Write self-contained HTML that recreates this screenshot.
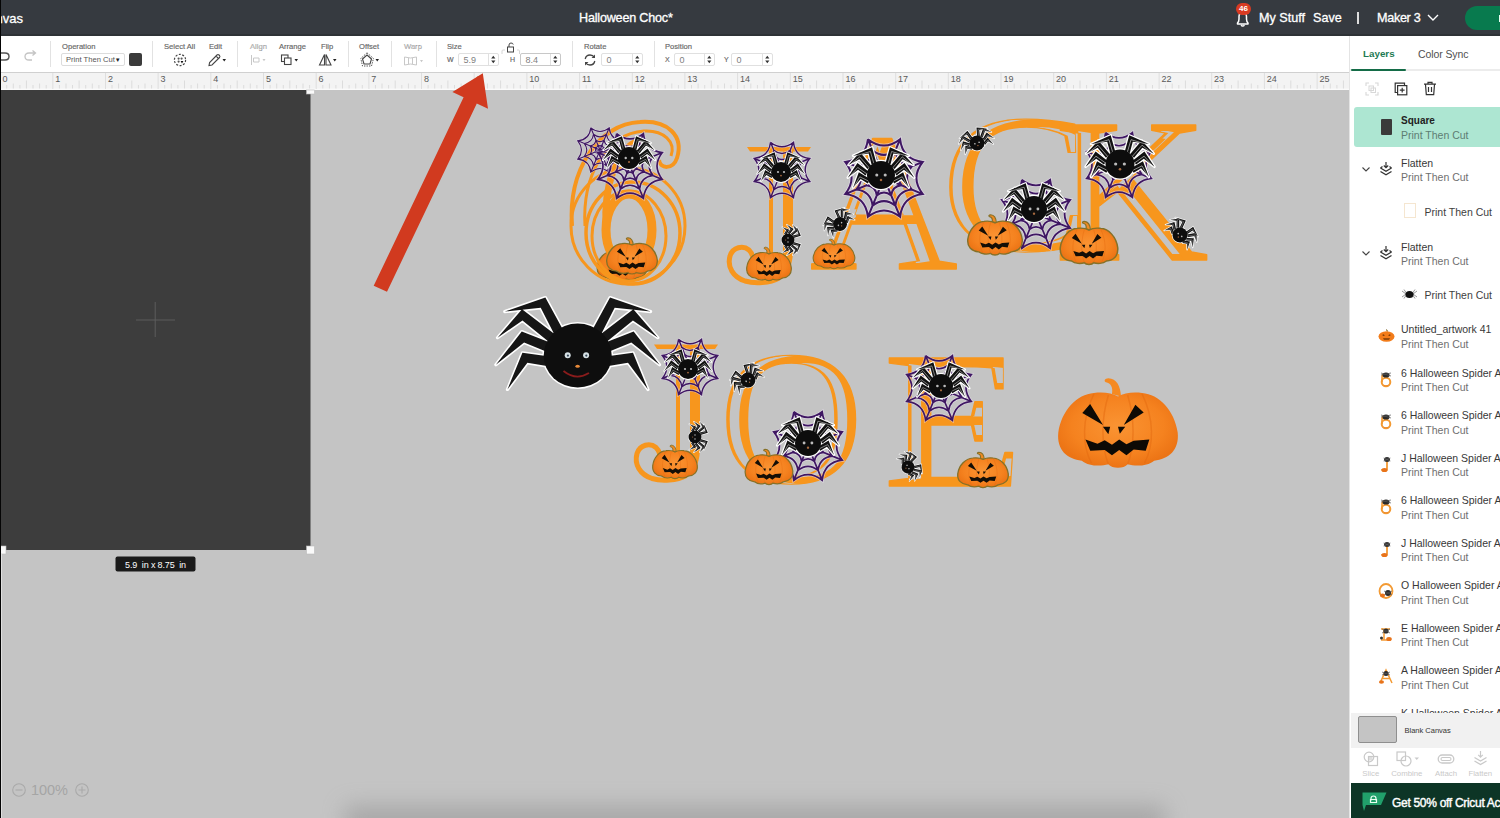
<!DOCTYPE html>
<html><head><meta charset="utf-8">
<style>
*{box-sizing:border-box;margin:0;padding:0}
html,body{width:1500px;height:818px;overflow:hidden;background:#c4c4c4;font-family:"Liberation Sans",sans-serif}
.a{position:absolute}
#top{left:0;top:0;width:1500px;height:36px;background:#363a40}
#tb{left:0;top:36px;width:1349px;height:36px;background:#fff}
#ruler{left:0;top:72px;width:1349px;height:18px;background:#f3f3f3;border-top:1px solid #d2d2d2}
#canvas{left:0;top:90px;width:1349px;height:728px;background:#c4c4c4;overflow:hidden}
#panel{left:1349px;top:36px;width:151px;height:782px;background:#fff;border-left:1px solid #e4e4e4;overflow:hidden}
.lbl{font-size:7.6px;color:#666;white-space:nowrap;-webkit-text-stroke:0.15px #666}
.sep{width:1px;height:26px;background:#e2e2e2;top:41px}
.wt{color:#fff;white-space:nowrap;-webkit-text-stroke:0.3px #fff}
.inp{height:13px;border:1px solid #e0e0e0;border-radius:2px;font-size:9px;color:#808080;line-height:12px;padding-left:4.5px;background:#fff}
.row{left:0;width:151px;height:42px}
.t1{font-size:10.3px;color:#333;white-space:nowrap;position:absolute;left:52px}
.t2{font-size:10.3px;color:#777;white-space:nowrap;position:absolute;left:52px}
</style></head><body>
<div id="top" class="a">
  <div class="a wt" style="top:11px;font-size:13px;left:-4.5px">nvas</div>
  <div class="a wt" style="left:579px;top:11px;font-size:12.6px;letter-spacing:-0.2px">Halloween Choc*</div>
  <div class="a wt" style="left:1259px;top:11px;font-size:12.6px">My Stuff</div>
  <div class="a wt" style="left:1313px;top:11px;font-size:12.6px">Save</div>
  <div class="a" style="left:1357px;top:12px;width:1.5px;height:12px;background:#ddd"></div>
  <div class="a wt" style="left:1377px;top:11px;font-size:12.6px;letter-spacing:-0.3px">Maker 3</div>

  <svg class="a" style="left:1233px;top:8px" width="20" height="20" viewBox="0 0 20 20"><path d="M4.5 16 L4.5 15 Q6 13.5 6 11 L6 8.5 Q6 5 9.5 4.5 Q13.5 5 13.5 8.5 L13.5 11 Q13.5 13.5 15 15 L15 16 Z M8 17.2 Q9.7 19 11.5 17.2" fill="none" stroke="#fff" stroke-width="1.5" stroke-linejoin="round"/></svg>
  <div class="a" style="left:1236px;top:3px;width:15px;height:12px;border-radius:6px;background:#d83a22;color:#fff;font-size:8px;font-weight:bold;text-align:center;line-height:12px">46</div>
  <svg class="a" style="left:1427px;top:13px" width="12" height="9" viewBox="0 0 12 9"><path d="M1 2 L6 7 L11 2" fill="none" stroke="#fff" stroke-width="1.4"/></svg>
  <div class="a" style="left:1465px;top:6px;width:60px;height:24px;border-radius:12px;background:#087a4e"></div>
  <div class="a" style="left:1498.5px;top:15px;width:2px;height:6.5px;background:#eafff4"></div>
  <div class="a" style="left:0;top:34px;width:1500px;height:2px;background:#2e3236"></div>
</div>
<div id="tb" class="a">
  <svg class="a" style="left:-4px;top:15px" width="16" height="12" viewBox="0 0 16 12"><path d="M2 2 H9 Q13 2 13 5.5 Q13 9 9 9 H2" fill="none" stroke="#555" stroke-width="1.4"/></svg>
  <svg class="a" style="left:22px;top:13px" width="18" height="14" viewBox="0 0 18 14"><path d="M13 4 H7 Q3 4 3 7.5 Q3 11 7 11 H10 M10.5 1.5 L13.5 4 L10.5 6.5" fill="none" stroke="#c4c4c4" stroke-width="1.3"/></svg>
  <div class="a sep" style="left:50px;top:5px"></div>
  <div class="a lbl" style="left:62px;top:6px">Operation</div>
  <div class="a" style="left:61px;top:17px;width:64px;height:13px;border:1px solid #dcdcdc;border-radius:2px;font-size:7.6px;color:#555;line-height:11px;padding-left:4px;white-space:nowrap">Print Then Cut<span style="font-size:6px;color:#222">&#9660;</span></div>
  <div class="a" style="left:129px;top:17px;width:13px;height:13px;background:#3b3b3b;border-radius:2px"></div>
  <div class="a sep" style="left:152px;top:5px"></div>
  <div class="a lbl" style="left:164px;top:6px">Select All</div>
  <svg class="a" style="left:173px;top:17px" width="16" height="14" viewBox="0 0 16 14"><circle cx="7" cy="7" r="5.6" fill="none" stroke="#444" stroke-width="1.2" stroke-dasharray="2 1.5"/><circle cx="5.6" cy="5.6" r="1.1" fill="#555"/><circle cx="8.6" cy="5.6" r="1.1" fill="#555"/><circle cx="5.6" cy="8.6" r="1.1" fill="#555"/><path d="M7.6 8 L10.4 8 L9 10.6Z" fill="#111"/></svg>
  <div class="a lbl" style="left:209px;top:6px">Edit</div>
  <svg class="a" style="left:207px;top:17px" width="22" height="14" viewBox="0 0 22 14"><path d="M2 12.5 L2.6 9.5 L10 2 Q11 1 12 2 L12.5 2.5 Q13.4 3.5 12.5 4.5 L5 12 Z M9 3 L11.6 5.6" fill="none" stroke="#444" stroke-width="1.1"/><path d="M15.5 6 L19 6 L17.25 8.5Z" fill="#222"/></svg>
  <div class="a sep" style="left:237px;top:5px"></div>
  <div class="a lbl" style="left:250px;top:6px;color:#c8c8c8">Align</div>
  <svg class="a" style="left:250px;top:18px" width="20" height="12" viewBox="0 0 20 12"><path d="M1.5 1 V11 M3.5 4 H9 V8 H3.5Z" fill="none" stroke="#c8c8c8" stroke-width="1"/><path d="M12.5 5 L15.5 5 L14 7.2Z" fill="#c8c8c8"/></svg>
  <div class="a lbl" style="left:279px;top:6px">Arrange</div>
  <svg class="a" style="left:280px;top:17px" width="20" height="14" viewBox="0 0 20 14"><rect x="1.5" y="2" width="6.5" height="6.5" fill="none" stroke="#444" stroke-width="1.1"/><rect x="4.5" y="5" width="6.5" height="6.5" fill="#fff" stroke="#444" stroke-width="1.1"/><path d="M14.5 6 L18 6 L16.25 8.5Z" fill="#222"/></svg>
  <div class="a lbl" style="left:321px;top:6px">Flip</div>
  <svg class="a" style="left:318px;top:17px" width="20" height="14" viewBox="0 0 20 14"><path d="M6.5 1.5 L1.5 12 H6.5 Z M8 1.5 L13 12 H8 Z" fill="none" stroke="#444" stroke-width="1.1"/><path d="M15 6 L18.5 6 L16.75 8.5Z" fill="#222"/></svg>
  <div class="a sep" style="left:348px;top:5px"></div>
  <div class="a lbl" style="left:359px;top:6px">Offset</div>
  <svg class="a" style="left:360px;top:16px" width="22" height="16" viewBox="0 0 22 16"><path d="M7 3 L11.5 7 L10 12 H4 L2.5 7Z" fill="none" stroke="#444" stroke-width="1.1"/><path d="M7 0.8 L13.5 6.5 L11.5 14 H2.5 L0.8 6.5Z" fill="none" stroke="#444" stroke-width="0.9" stroke-dasharray="1.4 1.1"/><path d="M15.5 7 L19 7 L17.25 9.5Z" fill="#222"/></svg>
  <div class="a sep" style="left:391px;top:5px"></div>
  <div class="a lbl" style="left:404px;top:6px;color:#c8c8c8">Warp</div>
  <svg class="a" style="left:403px;top:19px" width="24" height="12" viewBox="0 0 24 12"><path d="M1.5 2 Q7.5 4 13.5 2 V10 Q7.5 8 1.5 10Z M5.5 3 V9 M9.5 3 V9" fill="none" stroke="#c8c8c8" stroke-width="1"/><path d="M17 5 L20 5 L18.5 7.2Z" fill="#c8c8c8"/></svg>
  <div class="a sep" style="left:436px;top:5px"></div>
  <div class="a lbl" style="left:447px;top:6px">Size</div>
  <div class="a lbl" style="left:447px;top:20px;font-size:7px">W</div>
  <div class="a inp" style="left:458px;top:17px;width:41px">5.9<svg style="position:absolute;right:0;top:0" width="10" height="11" viewBox="0 0 10 11"><path d="M0.5 0 V11" stroke="#e0e0e0" stroke-width="1"/><path d="M3.2 4.6 L5.3 1.8 L7.4 4.6Z M3.2 6.4 L5.3 9.2 L7.4 6.4Z" fill="#333"/></svg></div>
  <svg class="a" style="left:501px;top:5px" width="20" height="13" viewBox="0 0 20 13"><rect x="6.5" y="6" width="6" height="5" fill="none" stroke="#444" stroke-width="1"/><path d="M8 6 V4 Q8 2 10 2 Q12 2 12.2 3.5" fill="none" stroke="#444" stroke-width="1"/><path d="M1 13 V10 Q1 9 2 9 H4 M16 9 H17.5 Q18.5 9 18.5 10 V13" fill="none" stroke="#ccc" stroke-width="0.8"/></svg>
  <div class="a lbl" style="left:510px;top:20px;font-size:7px">H</div>
  <div class="a inp" style="left:520px;top:17px;width:41px;border-color:#c8c8c8">8.4<svg style="position:absolute;right:0;top:0" width="10" height="11" viewBox="0 0 10 11"><path d="M0.5 0 V11" stroke="#e0e0e0" stroke-width="1"/><path d="M3.2 4.6 L5.3 1.8 L7.4 4.6Z M3.2 6.4 L5.3 9.2 L7.4 6.4Z" fill="#333"/></svg></div>
  <div class="a sep" style="left:572px;top:5px"></div>
  <div class="a lbl" style="left:584px;top:6px">Rotate</div>
  <svg class="a" style="left:583px;top:17px" width="14" height="14" viewBox="0 0 14 14"><path d="M2.2 6 Q3 2 7 2 Q10 2 11.5 4.5 M11.8 8 Q11 12 7 12 Q4 12 2.5 9.5" fill="none" stroke="#444" stroke-width="1.3"/><path d="M12 1.5 V5 H8.5Z M2 12.5 V9 H5.5Z" fill="#444"/></svg>
  <div class="a inp" style="left:601px;top:17px;width:42px">0<svg style="position:absolute;right:0;top:0" width="10" height="11" viewBox="0 0 10 11"><path d="M0.5 0 V11" stroke="#e0e0e0" stroke-width="1"/><path d="M3.2 4.6 L5.3 1.8 L7.4 4.6Z M3.2 6.4 L5.3 9.2 L7.4 6.4Z" fill="#333"/></svg></div>
  <div class="a sep" style="left:654px;top:5px"></div>
  <div class="a lbl" style="left:665px;top:6px">Position</div>
  <div class="a lbl" style="left:665px;top:20px;font-size:7px">X</div>
  <div class="a inp" style="left:674px;top:17px;width:41px">0<svg style="position:absolute;right:0;top:0" width="10" height="11" viewBox="0 0 10 11"><path d="M0.5 0 V11" stroke="#e0e0e0" stroke-width="1"/><path d="M3.2 4.6 L5.3 1.8 L7.4 4.6Z M3.2 6.4 L5.3 9.2 L7.4 6.4Z" fill="#333"/></svg></div>
  <div class="a lbl" style="left:724px;top:20px;font-size:7px">Y</div>
  <div class="a inp" style="left:731px;top:17px;width:42px">0<svg style="position:absolute;right:0;top:0" width="10" height="11" viewBox="0 0 10 11"><path d="M0.5 0 V11" stroke="#e0e0e0" stroke-width="1"/><path d="M3.2 4.6 L5.3 1.8 L7.4 4.6Z M3.2 6.4 L5.3 9.2 L7.4 6.4Z" fill="#333"/></svg></div>
</div>
<svg class="a" style="left:0;top:72px" width="1349" height="18" viewBox="0 0 1349 18">
<rect x="0" y="0" width="1349" height="18" fill="#f3f3f3"/>
<rect x="0" y="0" width="1349" height="1" fill="#d0d0d0"/>
<rect x="0" y="16.5" width="1349" height="1.5" fill="#fafafa"/>
<rect x="-0.4" y="1" width="1" height="16" fill="#dedede"/>
<text x="2.5" y="10.3" font-size="9" fill="#5a5a5a" font-family="Liberation Sans">0</text>
<rect x="6.2" y="13.0" width="1" height="3.5" fill="#dcdcdc"/>
<rect x="12.8" y="11.5" width="1" height="5" fill="#dcdcdc"/>
<rect x="19.4" y="13.0" width="1" height="3.5" fill="#dcdcdc"/>
<rect x="25.9" y="8.5" width="1" height="8" fill="#dcdcdc"/>
<rect x="32.5" y="13.0" width="1" height="3.5" fill="#dcdcdc"/>
<rect x="39.1" y="11.5" width="1" height="5" fill="#dcdcdc"/>
<rect x="45.7" y="13.0" width="1" height="3.5" fill="#dcdcdc"/>
<rect x="52.3" y="1" width="1" height="16" fill="#dedede"/>
<text x="55.2" y="10.3" font-size="9" fill="#5a5a5a" font-family="Liberation Sans">1</text>
<rect x="58.9" y="13.0" width="1" height="3.5" fill="#dcdcdc"/>
<rect x="65.5" y="11.5" width="1" height="5" fill="#dcdcdc"/>
<rect x="72.0" y="13.0" width="1" height="3.5" fill="#dcdcdc"/>
<rect x="78.6" y="8.5" width="1" height="8" fill="#dcdcdc"/>
<rect x="85.2" y="13.0" width="1" height="3.5" fill="#dcdcdc"/>
<rect x="91.8" y="11.5" width="1" height="5" fill="#dcdcdc"/>
<rect x="98.4" y="13.0" width="1" height="3.5" fill="#dcdcdc"/>
<rect x="105.0" y="1" width="1" height="16" fill="#dedede"/>
<text x="107.9" y="10.3" font-size="9" fill="#5a5a5a" font-family="Liberation Sans">2</text>
<rect x="111.5" y="13.0" width="1" height="3.5" fill="#dcdcdc"/>
<rect x="118.1" y="11.5" width="1" height="5" fill="#dcdcdc"/>
<rect x="124.7" y="13.0" width="1" height="3.5" fill="#dcdcdc"/>
<rect x="131.3" y="8.5" width="1" height="8" fill="#dcdcdc"/>
<rect x="137.9" y="13.0" width="1" height="3.5" fill="#dcdcdc"/>
<rect x="144.5" y="11.5" width="1" height="5" fill="#dcdcdc"/>
<rect x="151.1" y="13.0" width="1" height="3.5" fill="#dcdcdc"/>
<rect x="157.6" y="1" width="1" height="16" fill="#dedede"/>
<text x="160.5" y="10.3" font-size="9" fill="#5a5a5a" font-family="Liberation Sans">3</text>
<rect x="164.2" y="13.0" width="1" height="3.5" fill="#dcdcdc"/>
<rect x="170.8" y="11.5" width="1" height="5" fill="#dcdcdc"/>
<rect x="177.4" y="13.0" width="1" height="3.5" fill="#dcdcdc"/>
<rect x="184.0" y="8.5" width="1" height="8" fill="#dcdcdc"/>
<rect x="190.6" y="13.0" width="1" height="3.5" fill="#dcdcdc"/>
<rect x="197.1" y="11.5" width="1" height="5" fill="#dcdcdc"/>
<rect x="203.7" y="13.0" width="1" height="3.5" fill="#dcdcdc"/>
<rect x="210.3" y="1" width="1" height="16" fill="#dedede"/>
<text x="213.2" y="10.3" font-size="9" fill="#5a5a5a" font-family="Liberation Sans">4</text>
<rect x="216.9" y="13.0" width="1" height="3.5" fill="#dcdcdc"/>
<rect x="223.5" y="11.5" width="1" height="5" fill="#dcdcdc"/>
<rect x="230.1" y="13.0" width="1" height="3.5" fill="#dcdcdc"/>
<rect x="236.7" y="8.5" width="1" height="8" fill="#dcdcdc"/>
<rect x="243.2" y="13.0" width="1" height="3.5" fill="#dcdcdc"/>
<rect x="249.8" y="11.5" width="1" height="5" fill="#dcdcdc"/>
<rect x="256.4" y="13.0" width="1" height="3.5" fill="#dcdcdc"/>
<rect x="263.0" y="1" width="1" height="16" fill="#dedede"/>
<text x="265.9" y="10.3" font-size="9" fill="#5a5a5a" font-family="Liberation Sans">5</text>
<rect x="269.6" y="13.0" width="1" height="3.5" fill="#dcdcdc"/>
<rect x="276.2" y="11.5" width="1" height="5" fill="#dcdcdc"/>
<rect x="282.8" y="13.0" width="1" height="3.5" fill="#dcdcdc"/>
<rect x="289.3" y="8.5" width="1" height="8" fill="#dcdcdc"/>
<rect x="295.9" y="13.0" width="1" height="3.5" fill="#dcdcdc"/>
<rect x="302.5" y="11.5" width="1" height="5" fill="#dcdcdc"/>
<rect x="309.1" y="13.0" width="1" height="3.5" fill="#dcdcdc"/>
<rect x="315.7" y="1" width="1" height="16" fill="#dedede"/>
<text x="318.6" y="10.3" font-size="9" fill="#5a5a5a" font-family="Liberation Sans">6</text>
<rect x="322.3" y="13.0" width="1" height="3.5" fill="#dcdcdc"/>
<rect x="328.9" y="11.5" width="1" height="5" fill="#dcdcdc"/>
<rect x="335.4" y="13.0" width="1" height="3.5" fill="#dcdcdc"/>
<rect x="342.0" y="8.5" width="1" height="8" fill="#dcdcdc"/>
<rect x="348.6" y="13.0" width="1" height="3.5" fill="#dcdcdc"/>
<rect x="355.2" y="11.5" width="1" height="5" fill="#dcdcdc"/>
<rect x="361.8" y="13.0" width="1" height="3.5" fill="#dcdcdc"/>
<rect x="368.4" y="1" width="1" height="16" fill="#dedede"/>
<text x="371.3" y="10.3" font-size="9" fill="#5a5a5a" font-family="Liberation Sans">7</text>
<rect x="374.9" y="13.0" width="1" height="3.5" fill="#dcdcdc"/>
<rect x="381.5" y="11.5" width="1" height="5" fill="#dcdcdc"/>
<rect x="388.1" y="13.0" width="1" height="3.5" fill="#dcdcdc"/>
<rect x="394.7" y="8.5" width="1" height="8" fill="#dcdcdc"/>
<rect x="401.3" y="13.0" width="1" height="3.5" fill="#dcdcdc"/>
<rect x="407.9" y="11.5" width="1" height="5" fill="#dcdcdc"/>
<rect x="414.5" y="13.0" width="1" height="3.5" fill="#dcdcdc"/>
<rect x="421.0" y="1" width="1" height="16" fill="#dedede"/>
<text x="423.9" y="10.3" font-size="9" fill="#5a5a5a" font-family="Liberation Sans">8</text>
<rect x="427.6" y="13.0" width="1" height="3.5" fill="#dcdcdc"/>
<rect x="434.2" y="11.5" width="1" height="5" fill="#dcdcdc"/>
<rect x="440.8" y="13.0" width="1" height="3.5" fill="#dcdcdc"/>
<rect x="447.4" y="8.5" width="1" height="8" fill="#dcdcdc"/>
<rect x="454.0" y="13.0" width="1" height="3.5" fill="#dcdcdc"/>
<rect x="460.6" y="11.5" width="1" height="5" fill="#dcdcdc"/>
<rect x="467.1" y="13.0" width="1" height="3.5" fill="#dcdcdc"/>
<rect x="473.7" y="1" width="1" height="16" fill="#dedede"/>
<text x="476.6" y="10.3" font-size="9" fill="#5a5a5a" font-family="Liberation Sans">9</text>
<rect x="480.3" y="13.0" width="1" height="3.5" fill="#dcdcdc"/>
<rect x="486.9" y="11.5" width="1" height="5" fill="#dcdcdc"/>
<rect x="493.5" y="13.0" width="1" height="3.5" fill="#dcdcdc"/>
<rect x="500.1" y="8.5" width="1" height="8" fill="#dcdcdc"/>
<rect x="506.6" y="13.0" width="1" height="3.5" fill="#dcdcdc"/>
<rect x="513.2" y="11.5" width="1" height="5" fill="#dcdcdc"/>
<rect x="519.8" y="13.0" width="1" height="3.5" fill="#dcdcdc"/>
<rect x="526.4" y="1" width="1" height="16" fill="#dedede"/>
<text x="529.3" y="10.3" font-size="9" fill="#5a5a5a" font-family="Liberation Sans">10</text>
<rect x="533.0" y="13.0" width="1" height="3.5" fill="#dcdcdc"/>
<rect x="539.6" y="11.5" width="1" height="5" fill="#dcdcdc"/>
<rect x="546.2" y="13.0" width="1" height="3.5" fill="#dcdcdc"/>
<rect x="552.7" y="8.5" width="1" height="8" fill="#dcdcdc"/>
<rect x="559.3" y="13.0" width="1" height="3.5" fill="#dcdcdc"/>
<rect x="565.9" y="11.5" width="1" height="5" fill="#dcdcdc"/>
<rect x="572.5" y="13.0" width="1" height="3.5" fill="#dcdcdc"/>
<rect x="579.1" y="1" width="1" height="16" fill="#dedede"/>
<text x="582.0" y="10.3" font-size="9" fill="#5a5a5a" font-family="Liberation Sans">11</text>
<rect x="585.7" y="13.0" width="1" height="3.5" fill="#dcdcdc"/>
<rect x="592.2" y="11.5" width="1" height="5" fill="#dcdcdc"/>
<rect x="598.8" y="13.0" width="1" height="3.5" fill="#dcdcdc"/>
<rect x="605.4" y="8.5" width="1" height="8" fill="#dcdcdc"/>
<rect x="612.0" y="13.0" width="1" height="3.5" fill="#dcdcdc"/>
<rect x="618.6" y="11.5" width="1" height="5" fill="#dcdcdc"/>
<rect x="625.2" y="13.0" width="1" height="3.5" fill="#dcdcdc"/>
<rect x="631.8" y="1" width="1" height="16" fill="#dedede"/>
<text x="634.7" y="10.3" font-size="9" fill="#5a5a5a" font-family="Liberation Sans">12</text>
<rect x="638.3" y="13.0" width="1" height="3.5" fill="#dcdcdc"/>
<rect x="644.9" y="11.5" width="1" height="5" fill="#dcdcdc"/>
<rect x="651.5" y="13.0" width="1" height="3.5" fill="#dcdcdc"/>
<rect x="658.1" y="8.5" width="1" height="8" fill="#dcdcdc"/>
<rect x="664.7" y="13.0" width="1" height="3.5" fill="#dcdcdc"/>
<rect x="671.3" y="11.5" width="1" height="5" fill="#dcdcdc"/>
<rect x="677.9" y="13.0" width="1" height="3.5" fill="#dcdcdc"/>
<rect x="684.4" y="1" width="1" height="16" fill="#dedede"/>
<text x="687.3" y="10.3" font-size="9" fill="#5a5a5a" font-family="Liberation Sans">13</text>
<rect x="691.0" y="13.0" width="1" height="3.5" fill="#dcdcdc"/>
<rect x="697.6" y="11.5" width="1" height="5" fill="#dcdcdc"/>
<rect x="704.2" y="13.0" width="1" height="3.5" fill="#dcdcdc"/>
<rect x="710.8" y="8.5" width="1" height="8" fill="#dcdcdc"/>
<rect x="717.4" y="13.0" width="1" height="3.5" fill="#dcdcdc"/>
<rect x="724.0" y="11.5" width="1" height="5" fill="#dcdcdc"/>
<rect x="730.5" y="13.0" width="1" height="3.5" fill="#dcdcdc"/>
<rect x="737.1" y="1" width="1" height="16" fill="#dedede"/>
<text x="740.0" y="10.3" font-size="9" fill="#5a5a5a" font-family="Liberation Sans">14</text>
<rect x="743.7" y="13.0" width="1" height="3.5" fill="#dcdcdc"/>
<rect x="750.3" y="11.5" width="1" height="5" fill="#dcdcdc"/>
<rect x="756.9" y="13.0" width="1" height="3.5" fill="#dcdcdc"/>
<rect x="763.5" y="8.5" width="1" height="8" fill="#dcdcdc"/>
<rect x="770.0" y="13.0" width="1" height="3.5" fill="#dcdcdc"/>
<rect x="776.6" y="11.5" width="1" height="5" fill="#dcdcdc"/>
<rect x="783.2" y="13.0" width="1" height="3.5" fill="#dcdcdc"/>
<rect x="789.8" y="1" width="1" height="16" fill="#dedede"/>
<text x="792.7" y="10.3" font-size="9" fill="#5a5a5a" font-family="Liberation Sans">15</text>
<rect x="796.4" y="13.0" width="1" height="3.5" fill="#dcdcdc"/>
<rect x="803.0" y="11.5" width="1" height="5" fill="#dcdcdc"/>
<rect x="809.6" y="13.0" width="1" height="3.5" fill="#dcdcdc"/>
<rect x="816.1" y="8.5" width="1" height="8" fill="#dcdcdc"/>
<rect x="822.7" y="13.0" width="1" height="3.5" fill="#dcdcdc"/>
<rect x="829.3" y="11.5" width="1" height="5" fill="#dcdcdc"/>
<rect x="835.9" y="13.0" width="1" height="3.5" fill="#dcdcdc"/>
<rect x="842.5" y="1" width="1" height="16" fill="#dedede"/>
<text x="845.4" y="10.3" font-size="9" fill="#5a5a5a" font-family="Liberation Sans">16</text>
<rect x="849.1" y="13.0" width="1" height="3.5" fill="#dcdcdc"/>
<rect x="855.6" y="11.5" width="1" height="5" fill="#dcdcdc"/>
<rect x="862.2" y="13.0" width="1" height="3.5" fill="#dcdcdc"/>
<rect x="868.8" y="8.5" width="1" height="8" fill="#dcdcdc"/>
<rect x="875.4" y="13.0" width="1" height="3.5" fill="#dcdcdc"/>
<rect x="882.0" y="11.5" width="1" height="5" fill="#dcdcdc"/>
<rect x="888.6" y="13.0" width="1" height="3.5" fill="#dcdcdc"/>
<rect x="895.2" y="1" width="1" height="16" fill="#dedede"/>
<text x="898.1" y="10.3" font-size="9" fill="#5a5a5a" font-family="Liberation Sans">17</text>
<rect x="901.7" y="13.0" width="1" height="3.5" fill="#dcdcdc"/>
<rect x="908.3" y="11.5" width="1" height="5" fill="#dcdcdc"/>
<rect x="914.9" y="13.0" width="1" height="3.5" fill="#dcdcdc"/>
<rect x="921.5" y="8.5" width="1" height="8" fill="#dcdcdc"/>
<rect x="928.1" y="13.0" width="1" height="3.5" fill="#dcdcdc"/>
<rect x="934.7" y="11.5" width="1" height="5" fill="#dcdcdc"/>
<rect x="941.3" y="13.0" width="1" height="3.5" fill="#dcdcdc"/>
<rect x="947.8" y="1" width="1" height="16" fill="#dedede"/>
<text x="950.7" y="10.3" font-size="9" fill="#5a5a5a" font-family="Liberation Sans">18</text>
<rect x="954.4" y="13.0" width="1" height="3.5" fill="#dcdcdc"/>
<rect x="961.0" y="11.5" width="1" height="5" fill="#dcdcdc"/>
<rect x="967.6" y="13.0" width="1" height="3.5" fill="#dcdcdc"/>
<rect x="974.2" y="8.5" width="1" height="8" fill="#dcdcdc"/>
<rect x="980.8" y="13.0" width="1" height="3.5" fill="#dcdcdc"/>
<rect x="987.4" y="11.5" width="1" height="5" fill="#dcdcdc"/>
<rect x="993.9" y="13.0" width="1" height="3.5" fill="#dcdcdc"/>
<rect x="1000.5" y="1" width="1" height="16" fill="#dedede"/>
<text x="1003.4" y="10.3" font-size="9" fill="#5a5a5a" font-family="Liberation Sans">19</text>
<rect x="1007.1" y="13.0" width="1" height="3.5" fill="#dcdcdc"/>
<rect x="1013.7" y="11.5" width="1" height="5" fill="#dcdcdc"/>
<rect x="1020.3" y="13.0" width="1" height="3.5" fill="#dcdcdc"/>
<rect x="1026.9" y="8.5" width="1" height="8" fill="#dcdcdc"/>
<rect x="1033.4" y="13.0" width="1" height="3.5" fill="#dcdcdc"/>
<rect x="1040.0" y="11.5" width="1" height="5" fill="#dcdcdc"/>
<rect x="1046.6" y="13.0" width="1" height="3.5" fill="#dcdcdc"/>
<rect x="1053.2" y="1" width="1" height="16" fill="#dedede"/>
<text x="1056.1" y="10.3" font-size="9" fill="#5a5a5a" font-family="Liberation Sans">20</text>
<rect x="1059.8" y="13.0" width="1" height="3.5" fill="#dcdcdc"/>
<rect x="1066.4" y="11.5" width="1" height="5" fill="#dcdcdc"/>
<rect x="1073.0" y="13.0" width="1" height="3.5" fill="#dcdcdc"/>
<rect x="1079.5" y="8.5" width="1" height="8" fill="#dcdcdc"/>
<rect x="1086.1" y="13.0" width="1" height="3.5" fill="#dcdcdc"/>
<rect x="1092.7" y="11.5" width="1" height="5" fill="#dcdcdc"/>
<rect x="1099.3" y="13.0" width="1" height="3.5" fill="#dcdcdc"/>
<rect x="1105.9" y="1" width="1" height="16" fill="#dedede"/>
<text x="1108.8" y="10.3" font-size="9" fill="#5a5a5a" font-family="Liberation Sans">21</text>
<rect x="1112.5" y="13.0" width="1" height="3.5" fill="#dcdcdc"/>
<rect x="1119.0" y="11.5" width="1" height="5" fill="#dcdcdc"/>
<rect x="1125.6" y="13.0" width="1" height="3.5" fill="#dcdcdc"/>
<rect x="1132.2" y="8.5" width="1" height="8" fill="#dcdcdc"/>
<rect x="1138.8" y="13.0" width="1" height="3.5" fill="#dcdcdc"/>
<rect x="1145.4" y="11.5" width="1" height="5" fill="#dcdcdc"/>
<rect x="1152.0" y="13.0" width="1" height="3.5" fill="#dcdcdc"/>
<rect x="1158.6" y="1" width="1" height="16" fill="#dedede"/>
<text x="1161.5" y="10.3" font-size="9" fill="#5a5a5a" font-family="Liberation Sans">22</text>
<rect x="1165.1" y="13.0" width="1" height="3.5" fill="#dcdcdc"/>
<rect x="1171.7" y="11.5" width="1" height="5" fill="#dcdcdc"/>
<rect x="1178.3" y="13.0" width="1" height="3.5" fill="#dcdcdc"/>
<rect x="1184.9" y="8.5" width="1" height="8" fill="#dcdcdc"/>
<rect x="1191.5" y="13.0" width="1" height="3.5" fill="#dcdcdc"/>
<rect x="1198.1" y="11.5" width="1" height="5" fill="#dcdcdc"/>
<rect x="1204.7" y="13.0" width="1" height="3.5" fill="#dcdcdc"/>
<rect x="1211.2" y="1" width="1" height="16" fill="#dedede"/>
<text x="1214.1" y="10.3" font-size="9" fill="#5a5a5a" font-family="Liberation Sans">23</text>
<rect x="1217.8" y="13.0" width="1" height="3.5" fill="#dcdcdc"/>
<rect x="1224.4" y="11.5" width="1" height="5" fill="#dcdcdc"/>
<rect x="1231.0" y="13.0" width="1" height="3.5" fill="#dcdcdc"/>
<rect x="1237.6" y="8.5" width="1" height="8" fill="#dcdcdc"/>
<rect x="1244.2" y="13.0" width="1" height="3.5" fill="#dcdcdc"/>
<rect x="1250.8" y="11.5" width="1" height="5" fill="#dcdcdc"/>
<rect x="1257.3" y="13.0" width="1" height="3.5" fill="#dcdcdc"/>
<rect x="1263.9" y="1" width="1" height="16" fill="#dedede"/>
<text x="1266.8" y="10.3" font-size="9" fill="#5a5a5a" font-family="Liberation Sans">24</text>
<rect x="1270.5" y="13.0" width="1" height="3.5" fill="#dcdcdc"/>
<rect x="1277.1" y="11.5" width="1" height="5" fill="#dcdcdc"/>
<rect x="1283.7" y="13.0" width="1" height="3.5" fill="#dcdcdc"/>
<rect x="1290.3" y="8.5" width="1" height="8" fill="#dcdcdc"/>
<rect x="1296.8" y="13.0" width="1" height="3.5" fill="#dcdcdc"/>
<rect x="1303.4" y="11.5" width="1" height="5" fill="#dcdcdc"/>
<rect x="1310.0" y="13.0" width="1" height="3.5" fill="#dcdcdc"/>
<rect x="1316.6" y="1" width="1" height="16" fill="#dedede"/>
<text x="1319.5" y="10.3" font-size="9" fill="#5a5a5a" font-family="Liberation Sans">25</text>
<rect x="1323.2" y="13.0" width="1" height="3.5" fill="#dcdcdc"/>
<rect x="1329.8" y="11.5" width="1" height="5" fill="#dcdcdc"/>
<rect x="1336.4" y="13.0" width="1" height="3.5" fill="#dcdcdc"/>
<rect x="1342.9" y="8.5" width="1" height="8" fill="#dcdcdc"/>
</svg>
<div id="canvas" class="a"></div>
<svg class="a" style="left:0;top:0" width="1349" height="818" viewBox="0 0 1349 818">
<defs>
<g id="web"><path d="M0 0 L-15.31 -36.96 M0 0 L15.31 -36.96 M0 0 L36.96 -15.31 M0 0 L36.96 15.31 M0 0 L15.31 36.96 M0 0 L-15.31 36.96 M0 0 L-36.96 15.31 M0 0 L-36.96 -15.31 M-15.31 -36.96 Q0.00 -24.80 15.31 -36.96 Q17.54 -17.54 36.96 -15.31 Q24.80 0.00 36.96 15.31 Q17.54 17.54 15.31 36.96 Q0.00 24.80 -15.31 36.96 Q-17.54 17.54 -36.96 15.31 Q-24.80 0.00 -36.96 -15.31 Q-17.54 -17.54 -15.31 -36.96 M-10.91 -26.33 Q0.00 -17.67 10.91 -26.33 Q12.49 -12.49 26.33 -10.91 Q17.67 0.00 26.33 10.91 Q12.49 12.49 10.91 26.33 Q0.00 17.67 -10.91 26.33 Q-12.49 12.49 -26.33 10.91 Q-17.67 0.00 -26.33 -10.91 Q-12.49 -12.49 -10.91 -26.33 M-6.89 -16.63 Q0.00 -11.16 6.89 -16.63 Q7.89 -7.89 16.63 -6.89 Q11.16 0.00 16.63 6.89 Q7.89 7.89 6.89 16.63 Q0.00 11.16 -6.89 16.63 Q-7.89 7.89 -16.63 6.89 Q-11.16 0.00 -16.63 -6.89 Q-7.89 -7.89 -6.89 -16.63 M-3.44 -8.31 Q0.00 -5.58 3.44 -8.31 Q3.95 -3.95 8.31 -3.44 Q5.58 0.00 8.31 3.44 Q3.95 3.95 3.44 8.31 Q0.00 5.58 -3.44 8.31 Q-3.95 3.95 -8.31 3.44 Q-5.58 0.00 -8.31 -3.44 Q-3.95 -3.95 -3.44 -8.31" fill="none" stroke="#eadff0" stroke-opacity="0.6" stroke-width="3.4"/><path d="M0 0 L-15.31 -36.96 M0 0 L15.31 -36.96 M0 0 L36.96 -15.31 M0 0 L36.96 15.31 M0 0 L15.31 36.96 M0 0 L-15.31 36.96 M0 0 L-36.96 15.31 M0 0 L-36.96 -15.31 M-15.31 -36.96 Q0.00 -24.80 15.31 -36.96 Q17.54 -17.54 36.96 -15.31 Q24.80 0.00 36.96 15.31 Q17.54 17.54 15.31 36.96 Q0.00 24.80 -15.31 36.96 Q-17.54 17.54 -36.96 15.31 Q-24.80 0.00 -36.96 -15.31 Q-17.54 -17.54 -15.31 -36.96 M-10.91 -26.33 Q0.00 -17.67 10.91 -26.33 Q12.49 -12.49 26.33 -10.91 Q17.67 0.00 26.33 10.91 Q12.49 12.49 10.91 26.33 Q0.00 17.67 -10.91 26.33 Q-12.49 12.49 -26.33 10.91 Q-17.67 0.00 -26.33 -10.91 Q-12.49 -12.49 -10.91 -26.33 M-6.89 -16.63 Q0.00 -11.16 6.89 -16.63 Q7.89 -7.89 16.63 -6.89 Q11.16 0.00 16.63 6.89 Q7.89 7.89 6.89 16.63 Q0.00 11.16 -6.89 16.63 Q-7.89 7.89 -16.63 6.89 Q-11.16 0.00 -16.63 -6.89 Q-7.89 -7.89 -6.89 -16.63 M-3.44 -8.31 Q0.00 -5.58 3.44 -8.31 Q3.95 -3.95 8.31 -3.44 Q5.58 0.00 8.31 3.44 Q3.95 3.95 3.44 8.31 Q0.00 5.58 -3.44 8.31 Q-3.95 3.95 -8.31 3.44 Q-5.58 0.00 -8.31 -3.44 Q-3.95 -3.95 -3.44 -8.31" fill="none" stroke="#3f1763" stroke-width="1.9"/></g>
<g id="spw"><path d="M-3.26 -8.47 L-6.39 -19.76 L-19.95 -13.77 L-8.81 -15.39 L-6.74 -7.53Z M6.74 -7.53 L8.81 -15.39 L19.95 -13.77 L6.39 -19.76 L3.26 -8.47Z M-6.92 -6.65 L-14.97 -16.26 L-23.27 -7.12 L-15.43 -11.29 L-9.68 -4.35Z M9.68 -4.35 L15.43 -11.29 L23.27 -7.12 L14.97 -16.26 L6.92 -6.65Z M-8.89 -2.42 L-16.86 -8.66 L-23.75 1.90 L-16.39 -3.69 L-11.11 0.42Z M11.11 0.42 L16.39 -3.69 L23.75 1.90 L16.86 -8.66 L8.89 -2.42Z M-7.57 2.96 L-15.85 -1.94 L-19.95 9.03 L-14.55 2.89 L-9.43 6.04Z M9.43 6.04 L14.55 2.89 L19.95 9.03 L15.85 -1.94 L7.57 2.96Z" fill="#fff" stroke="#fff" stroke-width="1.8" stroke-linejoin="round"/><circle r="10.9" fill="#fff"/><path d="M-3.26 -8.47 L-6.39 -19.76 L-19.95 -13.77 L-8.81 -15.39 L-6.74 -7.53Z M6.74 -7.53 L8.81 -15.39 L19.95 -13.77 L6.39 -19.76 L3.26 -8.47Z M-6.92 -6.65 L-14.97 -16.26 L-23.27 -7.12 L-15.43 -11.29 L-9.68 -4.35Z M9.68 -4.35 L15.43 -11.29 L23.27 -7.12 L14.97 -16.26 L6.92 -6.65Z M-8.89 -2.42 L-16.86 -8.66 L-23.75 1.90 L-16.39 -3.69 L-11.11 0.42Z M11.11 0.42 L16.39 -3.69 L23.75 1.90 L16.86 -8.66 L8.89 -2.42Z M-7.57 2.96 L-15.85 -1.94 L-19.95 9.03 L-14.55 2.89 L-9.43 6.04Z M9.43 6.04 L14.55 2.89 L19.95 9.03 L15.85 -1.94 L7.57 2.96Z" fill="#111"/><path d="M-4.50 -6.30 L-7.60 -16.77 L-17.48 -13.83 M4.50 -6.30 L7.60 -16.77 L17.48 -13.83 M-7.47 -4.05 L-15.20 -12.97 L-21.66 -7.75 M7.47 -4.05 L15.20 -12.97 L21.66 -7.75 M-9.00 0.00 L-16.62 -5.38 L-22.32 0.99 M9.00 0.00 L16.62 -5.38 L22.32 0.99 M-7.65 4.95 L-15.20 1.27 L-19.00 8.02 M7.65 4.95 L15.20 1.27 L19.00 8.02" fill="none" stroke="#fff" stroke-width="0.55" opacity="0.65"/><circle r="10" fill="#0d0d0d"/><circle cx="-3" cy="0" r="1.1" fill="#bbb"/><circle cx="3" cy="0" r="1.1" fill="#bbb"/><circle cx="0" cy="3.6" r="0.9" fill="#a86a40"/></g>
<radialGradient id="pkg" cx="50%" cy="45%" r="55%"><stop offset="0" stop-color="#fa9433"/><stop offset="0.7" stop-color="#f5821f"/><stop offset="1" stop-color="#ec7415"/></radialGradient><g id="pk"><path d="M45 14 C46 8 44 5 40 4 C38 3 39 0.5 42 0.5 C49 1 52 7 52.5 16Z" fill="#f28a22" stroke="#857128" stroke-width="2.2"/><path d="M50 16 C55 13 62 12 70 13 C84 14 97 28 99.5 47 C101 62 92 70 80 71 C74 76 64 76 58 74 C55 78 45 78 42 74 C36 76 26 76 20 71 C8 70 -1 62 0.5 47 C3 28 16 14 30 13 C38 12 45 13 50 16Z" fill="url(#pkg)" stroke="#857128" stroke-width="2.6"/><path d="M30 14 C20 35 20 58 28 73 M70 14 C80 35 80 58 72 73 M42 15 C36 35 36 58 42 74 M58 15 C64 35 64 58 58 74" fill="none" stroke="#e3680e" stroke-width="1.6" opacity="0.45"/><path d="M20.4 30.2 L26.9 22.6 L37.6 40.4Z M71.3 29.9 L64.4 23.2 L54.8 40.4Z M37.5 42 L43.5 42 L42 48.5Z M50 42 L56 42 L51.5 48Z M23 53 L33 56.5 L39 53.5 L45 57.5 L51 53 L57 57 L63 54 L76 53 L73 62.5 L63 61.5 L57 66.5 L51 62 L45 66.5 L39 62 L27 62.5Z" fill="#140e06"/></g><g id="pkb"><path d="M45 14 C46 8 44 5 40 4 C38 3 39 0.5 42 0.5 C49 1 52 7 52.5 16Z" fill="#f58a22"/><path d="M50 16 C55 13 62 12 70 13 C84 14 97 28 99.5 47 C101 62 92 70 80 71 C74 76 64 76 58 74 C55 78 45 78 42 74 C36 76 26 76 20 71 C8 70 -1 62 0.5 47 C3 28 16 14 30 13 C38 12 45 13 50 16Z" fill="url(#pkg)"/><path d="M30 14 C20 35 20 58 28 73 M70 14 C80 35 80 58 72 73 M42 15 C36 35 36 58 42 74 M58 15 C64 35 64 58 58 74" fill="none" stroke="#e46a10" stroke-width="1.2" opacity="0.5"/><path d="M20.4 30.2 L26.9 22.6 L37.6 40.4Z M71.3 29.9 L64.4 23.2 L54.8 40.4Z M37.5 42 L43.5 42 L42 48.5Z M50 42 L56 42 L51.5 48Z M23 53 L33 56.5 L39 53.5 L45 57.5 L51 53 L57 57 L63 54 L76 53 L73 62.5 L63 61.5 L57 66.5 L51 62 L45 66.5 L39 62 L27 62.5Z" fill="#0d0a05"/></g>
<filter id="bl" x="-20%" y="-200%" width="140%" height="500%"><feGaussianBlur stdDeviation="11"/></filter>
</defs>
<rect x="345" y="806" width="820" height="30" fill="#8f8f8f" filter="url(#bl)" opacity="0.55"/>
<rect x="0" y="90" width="310.5" height="460" fill="#3d3d3d"/>
<path d="M155.2 302 V337 M136 320 H175" stroke="#5c5c5c" stroke-width="1"/>
<rect x="306.5" y="90" width="8" height="4" fill="#fafafa" stroke="#bbb" stroke-width="0.6"/>
<rect x="306.5" y="546" width="8" height="8" fill="#fafafa" stroke="#bbb" stroke-width="0.6"/>
<rect x="-2" y="546" width="8" height="8" fill="#fafafa" stroke="#bbb" stroke-width="0.6"/>
<rect x="1" y="554" width="0.8" height="264" fill="#e6e6e6"/>
<rect x="115.5" y="556.5" width="80" height="15" rx="2" fill="#1a1a1a"/>
<text x="155.5" y="567.5" text-anchor="middle" font-family="Liberation Sans" font-size="9" fill="#fff" letter-spacing="-0.15" style="white-space:pre">5.9  in x 8.75  in</text>
<use href="#pk" transform="translate(597.0,245.0) scale(0.500,0.462)"/>
<g fill="none" stroke="#f7961d"><ellipse cx="628" cy="226" rx="57" ry="58" stroke-width="3"/><ellipse cx="633" cy="233" rx="47" ry="51" stroke-width="3.5"/><ellipse cx="629" cy="236" rx="37" ry="45" stroke-width="3"/><ellipse cx="629" cy="230" rx="23" ry="36" stroke-width="9"/><path d="M572 226 C568 170 598 124 640 122 C668 120 684 136 677 158 C673 170 660 169 659 160" stroke-width="4"/><path d="M585 226 C582 175 606 134 644 131 C664 130 676 142 671 156" stroke-width="3"/><path d="M606 228 C604 185 615 150 640 140" stroke-width="7"/></g>
<g fill="#f7961d"><path d="M747 147 H811 L808 151.5 H750Z"/><rect x="769" y="151" width="4" height="114"/><path d="M783 151 H793 V250 C793 262 790 272 782 279 L777 276 C781 268 783 260 783 250Z"/></g><path d="M779 278 C770 283 755 284 745 281 C733 277 727 267 730 256 C733 247 743 245 749 250 C755 256 754 266 748 272" fill="none" stroke="#f7961d" stroke-width="5"/>
<g transform="translate(809.70,269.25) scale(1.0248,0.9809)"><clipPath id="lc1"><text x="0" y="0" font-family="Liberation Serif" font-size="200" >A</text></clipPath><clipPath id="lc1d"><text x="0" y="0" font-family="Liberation Serif" font-size="200" transform="translate(0,6.12)">A</text></clipPath><clipPath id="lc1u" clip-path="url(#lc1d)"><text x="0" y="0" font-family="Liberation Serif" font-size="200" transform="translate(0,-6.12)">A</text></clipPath><text x="0" y="0" font-family="Liberation Serif" font-size="200" fill="#f7961d" stroke="#f7961d" stroke-width="1.46" stroke-linejoin="round">A</text><g clip-path="url(#lc1)"><g clip-path="url(#lc1u)"><text x="0" y="0" font-family="Liberation Serif" font-size="200" transform="translate(2.68,0.00)" fill="#c4c4c4">A</text></g><text x="0" y="0" font-family="Liberation Serif" font-size="200" transform="translate(11.95,0.00)" fill="#f7961d">A</text></g></g>
<g transform="translate(940.80,250.27) scale(1.1184,0.9888)"><clipPath id="lc2"><text x="0" y="0" font-family="Liberation Serif" font-size="200" >C</text></clipPath><clipPath id="lc2d"><text x="0" y="0" font-family="Liberation Serif" font-size="200" transform="translate(0,0.00)">C</text></clipPath><clipPath id="lc2u" clip-path="url(#lc2d)"><text x="0" y="0" font-family="Liberation Serif" font-size="200" transform="translate(0,0.00)">C</text></clipPath><text x="0" y="0" font-family="Liberation Serif" font-size="200" fill="#f7961d" stroke="#f7961d" stroke-width="1.34" stroke-linejoin="round">C</text><g clip-path="url(#lc2)"><g clip-path="url(#lc2u)"><text x="0" y="0" font-family="Liberation Serif" font-size="200" transform="translate(2.46,0.00)" fill="#c4c4c4">C</text></g><text x="0" y="0" font-family="Liberation Serif" font-size="200" transform="translate(10.95,0.00)" fill="#f7961d">C</text></g></g>
<g transform="translate(1054.33,260.25) scale(1.0699,1.0269)"><clipPath id="lc3"><text x="0" y="0" font-family="Liberation Serif" font-size="200" >K</text></clipPath><clipPath id="lc3d"><text x="0" y="0" font-family="Liberation Serif" font-size="200" transform="translate(0,5.84)">K</text></clipPath><clipPath id="lc3u" clip-path="url(#lc3d)"><text x="0" y="0" font-family="Liberation Serif" font-size="200" transform="translate(0,-5.84)">K</text></clipPath><text x="0" y="0" font-family="Liberation Serif" font-size="200" fill="#f7961d" stroke="#f7961d" stroke-width="1.40" stroke-linejoin="round">K</text><g clip-path="url(#lc3)"><g clip-path="url(#lc3u)"><text x="0" y="0" font-family="Liberation Serif" font-size="200" transform="translate(2.57,0.00)" fill="#c4c4c4">K</text></g><text x="0" y="0" font-family="Liberation Serif" font-size="200" transform="translate(11.45,0.00)" fill="#f7961d">K</text></g></g>
<g transform="translate(-93,197.5)"><g fill="#f7961d"><path d="M747 147 H811 L808 151.5 H750Z"/><rect x="769" y="151" width="4" height="114"/><path d="M783 151 H793 V250 C793 262 790 272 782 279 L777 276 C781 268 783 260 783 250Z"/></g><path d="M779 278 C770 283 755 284 745 281 C733 277 727 267 730 256 C733 247 743 245 749 250 C755 256 754 266 748 272" fill="none" stroke="#f7961d" stroke-width="5"/></g>
<g transform="translate(718.72,482.33) scale(1.0039,0.9590)"><clipPath id="lc4"><text x="0" y="0" font-family="Liberation Serif" font-size="200" >O</text></clipPath><clipPath id="lc4d"><text x="0" y="0" font-family="Liberation Serif" font-size="200" transform="translate(0,0.00)">O</text></clipPath><clipPath id="lc4u" clip-path="url(#lc4d)"><text x="0" y="0" font-family="Liberation Serif" font-size="200" transform="translate(0,0.00)">O</text></clipPath><text x="0" y="0" font-family="Liberation Serif" font-size="200" fill="#f7961d" stroke="#f7961d" stroke-width="1.49" stroke-linejoin="round">O</text><g clip-path="url(#lc4)"><g clip-path="url(#lc4u)"><text x="0" y="0" font-family="Liberation Serif" font-size="200" transform="translate(2.74,0.00)" fill="#c4c4c4">O</text></g><text x="0" y="0" font-family="Liberation Serif" font-size="200" transform="translate(12.20,0.00)" fill="#f7961d">O</text></g></g>
<g transform="translate(882.82,486.25) scale(1.1557,0.9733)"><clipPath id="lc5"><text x="0" y="0" font-family="Liberation Serif" font-size="200" >E</text></clipPath><clipPath id="lc5d"><text x="0" y="0" font-family="Liberation Serif" font-size="200" transform="translate(0,6.16)">E</text></clipPath><clipPath id="lc5u" clip-path="url(#lc5d)"><text x="0" y="0" font-family="Liberation Serif" font-size="200" transform="translate(0,-6.16)">E</text></clipPath><text x="0" y="0" font-family="Liberation Serif" font-size="200" fill="#f7961d" stroke="#f7961d" stroke-width="1.30" stroke-linejoin="round">E</text><g clip-path="url(#lc5)"><g clip-path="url(#lc5u)"><text x="0" y="0" font-family="Liberation Serif" font-size="200" transform="translate(2.38,0.00)" fill="#c4c4c4">E</text></g><text x="0" y="0" font-family="Liberation Serif" font-size="200" transform="translate(10.60,0.00)" fill="#f7961d">E</text></g></g>
<use href="#web" transform="translate(600,150) scale(0.600)"/>
<use href="#web" transform="translate(630,166) scale(0.875)"/>
<use href="#spw" transform="translate(629,158) rotate(0) scale(1.100)"/>
<use href="#web" transform="translate(782,170) scale(0.750)"/>
<use href="#spw" transform="translate(781,172) rotate(0) scale(1.000)"/>
<use href="#web" transform="translate(884,178) scale(1.050)"/>
<use href="#spw" transform="translate(881,175) rotate(0) scale(1.400)"/>
<use href="#web" transform="translate(1036,214) scale(0.925)"/>
<use href="#spw" transform="translate(1034,209) rotate(0) scale(1.300)"/>
<use href="#web" transform="translate(1119,165) scale(0.875)"/>
<use href="#spw" transform="translate(1120,164) rotate(0) scale(1.450)"/>
<use href="#web" transform="translate(690,367) scale(0.750)"/>
<use href="#spw" transform="translate(688,369) rotate(0) scale(1.000)"/>
<use href="#web" transform="translate(808,446) scale(0.925)"/>
<use href="#spw" transform="translate(808,443) rotate(0) scale(1.300)"/>
<use href="#web" transform="translate(939,388) scale(0.875)"/>
<use href="#spw" transform="translate(941,386) rotate(0) scale(1.200)"/>
<use href="#spw" transform="translate(788,240) rotate(90) scale(0.650)"/>
<use href="#spw" transform="translate(695,437) rotate(90) scale(0.650)"/>
<use href="#spw" transform="translate(840,224) rotate(-40) scale(0.700)"/>
<use href="#spw" transform="translate(977,143) rotate(-20) scale(0.750)"/>
<use href="#spw" transform="translate(1180,235) rotate(40) scale(0.750)"/>
<use href="#spw" transform="translate(748,380) rotate(-35) scale(0.750)"/>
<use href="#spw" transform="translate(908,467) rotate(60) scale(0.650)"/>
<use href="#pk" transform="translate(606.5,237.5) scale(0.510,0.474)"/>
<use href="#pk" transform="translate(746.5,247.0) scale(0.450,0.436)"/>
<use href="#pk" transform="translate(813.0,239.0) scale(0.420,0.385)"/>
<use href="#pk" transform="translate(967.5,214.5) scale(0.550,0.526)"/>
<use href="#pk" transform="translate(1060.0,221.0) scale(0.580,0.564)"/>
<use href="#pk" transform="translate(652.5,445.0) scale(0.450,0.436)"/>
<use href="#pk" transform="translate(745.0,449.0) scale(0.480,0.462)"/>
<use href="#pk" transform="translate(957.5,452.0) scale(0.510,0.462)"/>
<use href="#pkb" transform="translate(1057.7,377.7) scale(1.206,1.168)"/>
<path d="M567.47 338.11 L545.37 297.60 L504.77 311.61 L540.73 307.80 L558.63 342.79Z M596.77 342.79 L614.67 307.80 L650.63 311.61 L610.03 297.60 L587.93 338.11Z M561.97 339.68 L522.04 309.31 L497.51 337.68 L522.48 320.51 L555.81 347.56Z M599.59 347.56 L632.92 320.51 L657.89 337.68 L633.36 309.31 L593.43 339.68Z M559.56 346.30 L521.76 331.54 L495.86 364.74 L524.08 342.50 L555.84 355.59Z M599.56 355.59 L631.32 342.50 L659.54 364.74 L633.64 331.54 L595.84 346.30Z M560.42 358.08 L522.42 352.79 L507.41 389.49 L527.38 362.83 L558.94 367.97Z M596.46 367.97 L628.02 362.83 L647.99 389.49 L632.98 352.79 L594.98 358.08Z" fill="#fff" stroke="#fff" stroke-width="3.2" stroke-linejoin="round"/>
<ellipse cx="577.7" cy="355.5" rx="35.5" ry="33.5" fill="#fff"/>
<path d="M567.47 338.11 L545.37 297.60 L504.77 311.61 L540.73 307.80 L558.63 342.79Z M596.77 342.79 L614.67 307.80 L650.63 311.61 L610.03 297.60 L587.93 338.11Z M561.97 339.68 L522.04 309.31 L497.51 337.68 L522.48 320.51 L555.81 347.56Z M599.59 347.56 L632.92 320.51 L657.89 337.68 L633.36 309.31 L593.43 339.68Z M559.56 346.30 L521.76 331.54 L495.86 364.74 L524.08 342.50 L555.84 355.59Z M599.56 355.59 L631.32 342.50 L659.54 364.74 L633.64 331.54 L595.84 346.30Z M560.42 358.08 L522.42 352.79 L507.41 389.49 L527.38 362.83 L558.94 367.97Z M596.46 367.97 L628.02 362.83 L647.99 389.49 L632.98 352.79 L594.98 358.08Z" fill="#161616"/>
<ellipse cx="577.7" cy="355.5" rx="34" ry="32" fill="#0e0e0e"/>
<circle cx="567.7" cy="355.2" r="3" fill="#d5e0e4"/><circle cx="586.1" cy="355.2" r="3" fill="#d5e0e4"/>
<circle cx="567.9" cy="355.6" r="1.1" fill="#345"/><circle cx="586.3" cy="355.6" r="1.1" fill="#345"/>
<ellipse cx="577.6" cy="366.2" rx="2.2" ry="1.5" fill="#e88a3a"/>
<path d="M563.5 371 Q576 381 589 373" fill="none" stroke="#8a1c1c" stroke-width="1.8"/>
<path d="M373.7 285.8 L463.6 97.3 L452.4 92 L482.8 73.2 L488 108.8 L476.8 103.5 L387 291.7Z" fill="#d13a1f"/>
<circle cx="19" cy="790" r="6.3" fill="none" stroke="#a9a9a9" stroke-width="1.1"/><path d="M15.5 790 H22.5" stroke="#a9a9a9" stroke-width="1.1"/>
<text x="31" y="795.3" font-family="Liberation Sans" font-size="14.5" fill="#a5a5a5" letter-spacing="-0.1">100%</text>
<circle cx="82" cy="790" r="6.3" fill="none" stroke="#a9a9a9" stroke-width="1.1"/><path d="M78.5 790 H85.5 M82 786.5 V793.5" stroke="#a9a9a9" stroke-width="1.1"/>
</svg>
<div id="panel" class="a">
<div class="a" style="left:13px;top:12px;font-size:9.8px;font-weight:bold;color:#1d7a53;white-space:nowrap">Layers</div>
<div class="a" style="left:68px;top:12px;font-size:10.5px;color:#505050;white-space:nowrap;letter-spacing:-0.1px">Color Sync</div>
<div class="a" style="left:0;top:33px;width:151px;height:2px;background:#ececec"></div>
<div class="a" style="left:1px;top:32.5px;width:55px;height:2.5px;background:#146c47;border-radius:1px"></div>
<svg class="a" style="left:15px;top:46px" width="14" height="14" viewBox="0 0 14 14"><path d="M1 4 V1 H4 M10 1 H13 V4 M13 10 V13 H10 M4 13 H1 V10" fill="none" stroke="#d8d8d8" stroke-width="1.1"/><rect x="4" y="4" width="4.5" height="4.5" fill="none" stroke="#d8d8d8" stroke-width="1"/><rect x="6" y="6" width="4.5" height="4.5" fill="none" stroke="#d8d8d8" stroke-width="1"/></svg>
<svg class="a" style="left:44px;top:46px" width="14" height="14" viewBox="0 0 14 14"><path d="M3.5 10.5 H1.2 V1.2 H10.5 V3.5" fill="none" stroke="#333" stroke-width="1.2"/><rect x="3.6" y="3.6" width="9.2" height="9.2" fill="none" stroke="#333" stroke-width="1.2"/><path d="M8.2 5.8 V10.6 M5.8 8.2 H10.6" stroke="#333" stroke-width="1.2"/></svg>
<svg class="a" style="left:73px;top:45px" width="14" height="15" viewBox="0 0 14 15"><path d="M1 3.2 H13 M5 3 V1.3 H9 V3 M2.5 3.5 L3.3 13.6 H10.7 L11.5 3.5 M5.5 6 V11 M8.5 6 V11" fill="none" stroke="#333" stroke-width="1.2"/></svg>
<div class="a" style="left:4px;top:71px;width:160px;height:40px;background:#ade6d2;border-radius:3px"></div>
<div class="a" style="left:31px;top:83px;width:11px;height:16px;background:#3a3a3a;border-radius:1px"></div>
<div class="a" style="left:51px;top:79.7px;font-size:10px;line-height:10px;font-weight:bold;color:#222;white-space:nowrap">Square</div>
<div class="a" style="left:51px;top:93.9px;font-size:10.5px;line-height:10.5px;color:#5d7d72;white-space:nowrap">Print Then Cut</div>
<svg class="a" style="left:11px;top:130px" width="10" height="7" viewBox="0 0 10 7"><path d="M1.5 1.5 L5 5 L8.5 1.5" fill="none" stroke="#444" stroke-width="1.1"/></svg>
<svg class="a" style="left:29px;top:125px" width="14" height="16" viewBox="0 0 14 16"><path d="M7 1 V6.5 M4.8 4.5 L7 6.7 L9.2 4.5" fill="none" stroke="#333" stroke-width="1.2"/><path d="M1.5 7 L7 10.3 L12.5 7 M1.5 10.5 L7 13.8 L12.5 10.5" fill="none" stroke="#333" stroke-width="1.3"/><path d="M3.5 5.5 L1.5 7 M10.5 5.5 L12.5 7" stroke="#333" stroke-width="1.2"/></svg>
<div class="a" style="left:51px;top:122.0px;font-size:10.5px;line-height:10.5px;color:#383838;white-space:nowrap">Flatten</div>
<div class="a" style="left:51px;top:136.4px;font-size:10.5px;line-height:10.5px;color:#6f6f6f;white-space:nowrap">Print Then Cut</div>
<div class="a" style="left:54px;top:167px;width:12px;height:15px;border:1px solid #f5e6d0;background:#fff"></div>
<div class="a" style="left:74.5px;top:170.7px;font-size:10.5px;line-height:10.5px;color:#3e3e3e;white-space:nowrap">Print Then Cut</div>
<svg class="a" style="left:11px;top:214px" width="10" height="7" viewBox="0 0 10 7"><path d="M1.5 1.5 L5 5 L8.5 1.5" fill="none" stroke="#444" stroke-width="1.1"/></svg>
<svg class="a" style="left:29px;top:209px" width="14" height="16" viewBox="0 0 14 16"><path d="M7 1 V6.5 M4.8 4.5 L7 6.7 L9.2 4.5" fill="none" stroke="#333" stroke-width="1.2"/><path d="M1.5 7 L7 10.3 L12.5 7 M1.5 10.5 L7 13.8 L12.5 10.5" fill="none" stroke="#333" stroke-width="1.3"/><path d="M3.5 5.5 L1.5 7 M10.5 5.5 L12.5 7" stroke="#333" stroke-width="1.2"/></svg>
<div class="a" style="left:51px;top:205.6px;font-size:10.5px;line-height:10.5px;color:#383838;white-space:nowrap">Flatten</div>
<div class="a" style="left:51px;top:220.2px;font-size:10.5px;line-height:10.5px;color:#6f6f6f;white-space:nowrap">Print Then Cut</div>
<svg class="a" style="left:51px;top:252px" width="17" height="12" viewBox="0 0 17 12"><path d="M1 3 L5 6 L1 9 M3 1.5 L6 6 L3 10.5 M16 3 L12 6 L16 9 M14 1.5 L11 6 L14 10.5" fill="none" stroke="#999" stroke-width="1"/><ellipse cx="8.5" cy="6.5" rx="4" ry="3.5" fill="#111"/></svg>
<div class="a" style="left:74.5px;top:254.1px;font-size:10.5px;line-height:10.5px;color:#3e3e3e;white-space:nowrap">Print Then Cut</div>
<svg class="a" style="left:28px;top:293px" width="17" height="13" viewBox="0 0 17 13"><path d="M8 1 Q9 0 9.5 2.5" stroke="#7a6020" stroke-width="1" fill="none"/><ellipse cx="8.5" cy="7.5" rx="8" ry="5.2" fill="#f27c1a"/><path d="M4 6 L6 5.5 L6.5 7Z M13 6 L11 5.5 L10.5 7Z M5 9.5 H12 L11 10.5 H6Z" fill="#3a1a00"/></svg>
<div class="a" style="left:51px;top:288.3px;font-size:10.5px;line-height:10.5px;color:#383838;white-space:nowrap">Untitled_artwork 41</div>
<div class="a" style="left:51px;top:303.4px;font-size:10.5px;line-height:10.5px;color:#6f6f6f;white-space:nowrap">Print Then Cut</div>
<svg class="a" style="left:29px;top:334px" width="14" height="18" viewBox="0 0 14 18"><ellipse cx="7" cy="12" rx="4.3" ry="4.3" fill="none" stroke="#f39a33" stroke-width="2"/><path d="M3 12 V7 Q3 4 6 4" fill="none" stroke="#f39a33" stroke-width="1.6"/><path d="M3.5 14 Q7 17.5 10.5 14 Q9 16 7 16.2 Q5 16 3.5 14Z" fill="#e0701a"/><ellipse cx="7" cy="5" rx="3.5" ry="2.6" fill="#2a2a2a"/><path d="M2 5 L12 3 M2 3 L12 6" stroke="#555" stroke-width="0.7"/></svg>
<div class="a" style="left:51px;top:331.7px;font-size:10.5px;line-height:10.5px;color:#383838;white-space:nowrap">6 Halloween Spider A</div>
<div class="a" style="left:51px;top:346.0px;font-size:10.5px;line-height:10.5px;color:#6f6f6f;white-space:nowrap">Print Then Cut</div>
<svg class="a" style="left:29px;top:376px" width="14" height="18" viewBox="0 0 14 18"><ellipse cx="7" cy="12" rx="4.3" ry="4.3" fill="none" stroke="#f39a33" stroke-width="2"/><path d="M3 12 V7 Q3 4 6 4" fill="none" stroke="#f39a33" stroke-width="1.6"/><path d="M3.5 14 Q7 17.5 10.5 14 Q9 16 7 16.2 Q5 16 3.5 14Z" fill="#e0701a"/><ellipse cx="7" cy="5" rx="3.5" ry="2.6" fill="#2a2a2a"/><path d="M2 5 L12 3 M2 3 L12 6" stroke="#555" stroke-width="0.7"/></svg>
<div class="a" style="left:51px;top:374.2px;font-size:10.5px;line-height:10.5px;color:#383838;white-space:nowrap">6 Halloween Spider A</div>
<div class="a" style="left:51px;top:388.5px;font-size:10.5px;line-height:10.5px;color:#6f6f6f;white-space:nowrap">Print Then Cut</div>
<svg class="a" style="left:29px;top:419px" width="14" height="18" viewBox="0 0 14 18"><path d="M8 5 V14 Q8 16 5 16 Q3 16 3 14" fill="none" stroke="#f39a33" stroke-width="1.8"/><ellipse cx="5.5" cy="15" rx="3" ry="2" fill="#e8731b"/><ellipse cx="8" cy="4.5" rx="3" ry="2.5" fill="#333"/><path d="M4.5 3 L11.5 6 M4.5 6 L11.5 3" stroke="#666" stroke-width="0.6"/></svg>
<div class="a" style="left:51px;top:416.7px;font-size:10.5px;line-height:10.5px;color:#383838;white-space:nowrap">J Halloween Spider A</div>
<div class="a" style="left:51px;top:431.0px;font-size:10.5px;line-height:10.5px;color:#6f6f6f;white-space:nowrap">Print Then Cut</div>
<svg class="a" style="left:29px;top:461px" width="14" height="18" viewBox="0 0 14 18"><ellipse cx="7" cy="12" rx="4.3" ry="4.3" fill="none" stroke="#f39a33" stroke-width="2"/><path d="M3 12 V7 Q3 4 6 4" fill="none" stroke="#f39a33" stroke-width="1.6"/><path d="M3.5 14 Q7 17.5 10.5 14 Q9 16 7 16.2 Q5 16 3.5 14Z" fill="#e0701a"/><ellipse cx="7" cy="5" rx="3.5" ry="2.6" fill="#2a2a2a"/><path d="M2 5 L12 3 M2 3 L12 6" stroke="#555" stroke-width="0.7"/></svg>
<div class="a" style="left:51px;top:459.2px;font-size:10.5px;line-height:10.5px;color:#383838;white-space:nowrap">6 Halloween Spider A</div>
<div class="a" style="left:51px;top:473.5px;font-size:10.5px;line-height:10.5px;color:#6f6f6f;white-space:nowrap">Print Then Cut</div>
<svg class="a" style="left:29px;top:504px" width="14" height="18" viewBox="0 0 14 18"><path d="M8 5 V14 Q8 16 5 16 Q3 16 3 14" fill="none" stroke="#f39a33" stroke-width="1.8"/><ellipse cx="5.5" cy="15" rx="3" ry="2" fill="#e8731b"/><ellipse cx="8" cy="4.5" rx="3" ry="2.5" fill="#333"/><path d="M4.5 3 L11.5 6 M4.5 6 L11.5 3" stroke="#666" stroke-width="0.6"/></svg>
<div class="a" style="left:51px;top:501.7px;font-size:10.5px;line-height:10.5px;color:#383838;white-space:nowrap">J Halloween Spider A</div>
<div class="a" style="left:51px;top:516.0px;font-size:10.5px;line-height:10.5px;color:#6f6f6f;white-space:nowrap">Print Then Cut</div>
<svg class="a" style="left:27px;top:546px" width="18" height="18" viewBox="0 0 18 18"><ellipse cx="9" cy="9" rx="6.5" ry="7" fill="none" stroke="#f39a33" stroke-width="1.8"/><circle cx="11" cy="11" r="3" fill="#2a2a2a"/><path d="M7 9 L15 13 M7 13 L15 9" stroke="#555" stroke-width="0.7"/><ellipse cx="5.5" cy="13.5" rx="2.5" ry="2" fill="#e8731b"/></svg>
<div class="a" style="left:51px;top:544.2px;font-size:10.5px;line-height:10.5px;color:#383838;white-space:nowrap">O Halloween Spider A</div>
<div class="a" style="left:51px;top:558.5px;font-size:10.5px;line-height:10.5px;color:#6f6f6f;white-space:nowrap">Print Then Cut</div>
<svg class="a" style="left:27px;top:589px" width="18" height="18" viewBox="0 0 18 18"><path d="M4 4 H13 M7 4 V15 M4 15 H14" fill="none" stroke="#f39a33" stroke-width="1.5"/><circle cx="9" cy="6" r="2.6" fill="#2a2a2a"/><path d="M5 4 L13 8 M5 8 L13 4" stroke="#555" stroke-width="0.7"/><ellipse cx="12" cy="14" rx="2.8" ry="2" fill="#e8731b"/><circle cx="4.5" cy="13" r="1.5" fill="#333"/></svg>
<div class="a" style="left:51px;top:586.7px;font-size:10.5px;line-height:10.5px;color:#383838;white-space:nowrap">E Halloween Spider A</div>
<div class="a" style="left:51px;top:601.0px;font-size:10.5px;line-height:10.5px;color:#6f6f6f;white-space:nowrap">Print Then Cut</div>
<svg class="a" style="left:27px;top:631px" width="18" height="18" viewBox="0 0 18 18"><path d="M3 16 L9 3 L15 16 M5 11.5 H13" fill="none" stroke="#f39a33" stroke-width="1.5"/><circle cx="9" cy="6.5" r="2.5" fill="#2a2a2a"/><path d="M5 5 L13 8 M5 8 L13 5" stroke="#555" stroke-width="0.7"/><ellipse cx="4.5" cy="15" rx="2.5" ry="1.8" fill="#e8731b"/></svg>
<div class="a" style="left:51px;top:629.2px;font-size:10.5px;line-height:10.5px;color:#383838;white-space:nowrap">A Halloween Spider A</div>
<div class="a" style="left:51px;top:643.5px;font-size:10.5px;line-height:10.5px;color:#6f6f6f;white-space:nowrap">Print Then Cut</div>
<div class="a" style="left:51px;top:671.7px;font-size:10.5px;line-height:10.5px;color:#383838;white-space:nowrap">K Halloween Spider A</div>
<div class="a" style="left:30px;top:676.8px;width:14px;height:3px;background:#f5b27a"></div>
<div class="a" style="left:1px;top:676.7px;width:160px;height:35.5px;background:#f1f1f1"></div>
<div class="a" style="left:8px;top:680px;width:39px;height:26.5px;background:#c4c4c4;border:1px solid #8f8f8f;border-radius:2px"></div>
<div class="a" style="left:54.5px;top:689.5px;font-size:7.5px;color:#333;white-space:nowrap">Blank Canvas</div>
<svg class="a" style="left:13px;top:715px" width="16" height="16" viewBox="0 0 16 16"><circle cx="6" cy="6" r="4.8" fill="none" stroke="#c9c9c9" stroke-width="1.2"/><rect x="5.5" y="5.5" width="9" height="9" fill="none" stroke="#c9c9c9" stroke-width="1.2"/><rect x="5.5" y="5.5" width="4" height="4" fill="#c9c9c9" opacity="0.6"/></svg>
<svg class="a" style="left:46px;top:715px" width="26" height="16" viewBox="0 0 26 16"><rect x="1" y="1" width="8.5" height="8.5" fill="none" stroke="#c9c9c9" stroke-width="1.2"/><circle cx="10" cy="10" r="5" fill="none" stroke="#c9c9c9" stroke-width="1.2"/><path d="M18.5 6.5 H23 L20.75 9Z" fill="#c9c9c9"/></svg>
<svg class="a" style="left:87px;top:717px" width="18" height="12" viewBox="0 0 18 12"><rect x="1.2" y="2" width="15.6" height="8" rx="4" fill="none" stroke="#c9c9c9" stroke-width="1.3"/><rect x="4" y="4.5" width="10" height="3" rx="1.5" fill="none" stroke="#c9c9c9" stroke-width="1.1"/></svg>
<svg class="a" style="left:123px;top:714px" width="15" height="17" viewBox="0 0 15 17"><path d="M7.5 1 V7 M5.2 4.8 L7.5 7.1 L9.8 4.8" fill="none" stroke="#c9c9c9" stroke-width="1.2"/><path d="M1.5 7.5 L7.5 11 L13.5 7.5 M1.5 11 L7.5 14.5 L13.5 11" fill="none" stroke="#c9c9c9" stroke-width="1.3"/></svg>
<div class="a" style="left:-9.200000000000045px;width:60px;text-align:center;top:733px;font-size:7.8px;color:#c9c9c9;white-space:nowrap">Slice</div>
<div class="a" style="left:26.799999999999955px;width:60px;text-align:center;top:733px;font-size:7.8px;color:#c9c9c9;white-space:nowrap">Combine</div>
<div class="a" style="left:66px;width:60px;text-align:center;top:733px;font-size:7.8px;color:#c9c9c9;white-space:nowrap">Attach</div>
<div class="a" style="left:100.29999999999995px;width:60px;text-align:center;top:733px;font-size:7.8px;color:#c9c9c9;white-space:nowrap">Flatten</div>
<div class="a" style="left:1px;top:747px;width:160px;height:40px;background:#0d3526"></div>
<svg class="a" style="left:12px;top:756px" width="26" height="20" viewBox="0 0 26 20"><path d="M0.5 0.5 H24.5 L19 13 H4 L2 19 L0.5 13Z" fill="#21a06b"/><path d="M9 8.5 V6.5 Q9 4 11.5 4 Q14 4 14 6.5 V8.5 M8.5 7.5 H14.5 V10.5 H8.5Z" fill="none" stroke="#e8fff2" stroke-width="1.2"/></svg>
<div class="a" style="left:42px;top:760px;font-size:12px;color:#fff;-webkit-text-stroke:0.4px #fff;white-space:nowrap;letter-spacing:-0.3px">Get 50% off Cricut Accessories</div>
</div>
<div class="a" style="left:0;top:0;width:1px;height:818px;background:#050505"></div>
</body></html>
